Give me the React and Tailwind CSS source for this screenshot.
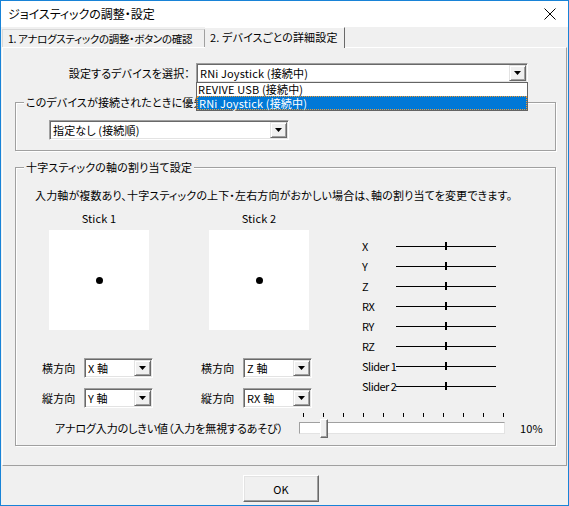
import clsx from "clsx";

const axes = ["X", "Y", "Z", "RX", "RY", "RZ", "Slider 1", "Slider 2"];
const ticks = [0, 1, 2, 3, 4, 5, 6, 7, 8, 9, 10];

function Arrow() {
  return (
    <div className="w-[17px] h-full flex items-center justify-center bg-[#f0f0f0] border border-t-[#e3e3e3] border-l-[#e3e3e3] border-r-[#696969] border-b-[#696969] shadow-[inset_1px_1px_0_#fff,inset_-1px_-1px_0_#a0a0a0]">
      <svg width="7" height="4" viewBox="0 0 7 4">
        <path d="M0 0h7L3.5 4z" fill="#000" />
      </svg>
    </div>
  );
}

function Combo({ className, text, children }) {
  return (
    <div
      className={clsx(
        "relative flex h-[20px] bg-white border border-t-[#a0a0a0] border-l-[#a0a0a0] border-r-white border-b-white shadow-[inset_1px_1px_0_#696969,inset_-1px_-1px_0_#e3e3e3] p-[1px]",
        className
      )}
    >
      <div className="flex-1 pl-[2px] leading-[16px] whitespace-nowrap overflow-hidden">{text}</div>
      <Arrow />
      {children}
    </div>
  );
}

function Group({ className, title, children }) {
  return (
    <div className={clsx("relative border border-[#a0a0a0] shadow-[inset_1px_1px_0_#fff,1px_1px_0_#fff]", className)}>
      <span className="absolute left-[8px] -top-[9px] px-[2px] bg-[#f0f0f0] whitespace-nowrap">{title}</span>
      {children}
    </div>
  );
}

export default function App() {
  return (
    <div className="w-[569px] h-[506px] flex flex-col border border-[#1883d7] bg-[#f0f0f0] text-black text-[11px] tracking-[0.15px] leading-[16px] font-['Noto_Sans_CJK_JP',sans-serif] [font-feature-settings:'palt'] overflow-hidden">
      {/* title bar */}
      <div className="h-[26px] shrink-0 bg-white flex items-center justify-between pl-[7px] pr-[12px]">
        <span className="text-[12px] tracking-normal">ジョイスティックの調整・設定</span>
        <svg width="12" height="12" viewBox="0 0 12 12">
          <path d="M0.5 0.5l11 11M11.5 0.5l-11 11" stroke="#000" strokeWidth="1" />
        </svg>
      </div>

      {/* tabs */}
      <div className="h-[20px] shrink-0 flex items-end pl-[1px] relative z-10">
        <div className="h-[18px] w-[203px] border-t border-l border-r border-t-[#d9d9d9] border-l-[#d9d9d9] border-r-[#a0a0a0] pl-[5px] leading-[17px] text-[10.5px] tracking-[-0.3px] whitespace-nowrap">
          1. アナログスティックの調整・ボタンの確認
        </div>
        <div className="h-[21px] w-[140px] -mb-[1px] bg-[#f0f0f0] border-t border-r border-t-white border-r-[#696969] pl-[5px] pt-[1px] leading-[17px] whitespace-nowrap">
          2. デバイスごとの詳細設定
        </div>
      </div>

      {/* tab page */}
      <div className="h-[419px] shrink-0 mx-[1px] border border-t-white border-l-white border-r-[#a0a0a0] border-b-[#a0a0a0]">
        <div className="pt-[15px] flex items-center">
          <div className="w-[187px] text-right whitespace-nowrap">設定するデバイスを選択：</div>
          <Combo className="ml-[6px] w-[332px] z-20" text="RNi Joystick (接続中)">
            <div className="absolute left-0 top-full w-[332px] -ml-[1px] bg-white border border-[#646464]">
              <div className="h-[13px] leading-[13px] pl-[1px] whitespace-nowrap">REVIVE USB (接続中)</div>
              <div className="h-[14px] leading-[12px] pl-[1px] bg-[#0078d7] text-white border border-dotted border-[#f29a2e] whitespace-nowrap">
                RNi Joystick (接続中)
              </div>
            </div>
          </Combo>
        </div>

        <Group className="mt-[19px] ml-[12px] w-[541px] h-[49px]" title="このデバイスが接続されたときに優先的に使用する設定">
          <div className="pl-[33px] pt-[17px]">
            <Combo className="w-[240px]" text="指定なし (接続順)" />
          </div>
        </Group>

        <Group className="mt-[16px] ml-[12px] w-[541px] h-[279px]" title="十字スティックの軸の割り当て設定">
          <div className="pl-[19px] pt-[19px] whitespace-nowrap">
            入力軸が複数あり、十字スティックの上下・左右方向がおかしい場合は、軸の割り当てを変更できます。
          </div>

          <div className="mt-[7px] flex">
            <div className="w-[296px]">
              <div className="pl-[33px] flex gap-[60px]">
                {["Stick 1", "Stick 2"].map((s) => (
                  <div key={s} className="w-[100px]">
                    <div className="h-[16px] text-center">{s}</div>
                    <div className="mt-[4px] h-[100px] bg-white flex items-center justify-center">
                      <div className="w-[7px] h-[7px] rounded-full bg-black" />
                    </div>
                  </div>
                ))}
              </div>

              <div className="mt-[28px] pl-[26px] flex flex-col gap-[10px]">
                {[
                  ["横方向", "X 軸", "Z 軸"],
                  ["縦方向", "Y 軸", "RX 軸"],
                ].map(([label, a, b]) => (
                  <div key={label} className="flex items-center h-[20px]">
                    <div className="w-[42px]">{label}</div>
                    <Combo className="w-[69px]" text={a} />
                    <div className="w-[42px] ml-[48px]">{label}</div>
                    <Combo className="w-[69px]" text={b} />
                  </div>
                ))}
              </div>
            </div>

            <div className="ml-[50px] mt-[26px]">
              {axes.map((a) => (
                <div key={a} className="h-[20px] flex items-center">
                  <div className="w-[34px] whitespace-nowrap tracking-[-0.5px]">{a}</div>
                  <div className="relative w-[100px] h-[20px]">
                    <div className="absolute left-0 right-0 top-[10px] h-[1px] bg-black" />
                    <div className="absolute left-[49px] top-[6px] w-[2px] h-[8px] bg-black" />
                  </div>
                </div>
              ))}
            </div>
          </div>

          <div className="mt-[2px] flex items-start h-[30px]">
            <div className="ml-[39px] w-[244px] pt-[10px] whitespace-nowrap tracking-[-0.1px]">
              アナログ入力のしきい値（入力を無視するあそび）
            </div>
            <div className="relative w-[206px] h-[30px]">
              {ticks.map((t) => (
                <div
                  key={t}
                  className="absolute top-[3px] w-[1px] h-[4px] bg-black"
                  style={{ left: 4 + t * 20 }}
                />
              ))}
              <div className="absolute left-0 right-0 top-[12px] h-[12px] bg-white border border-t-[#a0a0a0] border-l-[#a0a0a0] border-r-[#e3e3e3] border-b-[#e3e3e3]" />
              <div className="absolute left-[21px] top-[9px] w-[8px] h-[19px] bg-[#f0f0f0] border border-t-white border-l-white border-r-[#696969] border-b-[#696969] shadow-[inset_-1px_-1px_0_#a0a0a0]" />
            </div>
            <div className="ml-[15px] pt-[10px]">10%</div>
          </div>
        </Group>
      </div>

      {/* bottom */}
      <div className="flex-1 pt-[9px] pl-[242px]">
        <button className="w-[76px] h-[27px] bg-[#f0f0f0] border border-t-white border-l-white border-r-[#696969] border-b-[#696969] shadow-[inset_-1px_-1px_0_#a0a0a0,inset_1px_1px_0_#e3e3e3] text-[11px]">
          OK
        </button>
      </div>
    </div>
  );
}
